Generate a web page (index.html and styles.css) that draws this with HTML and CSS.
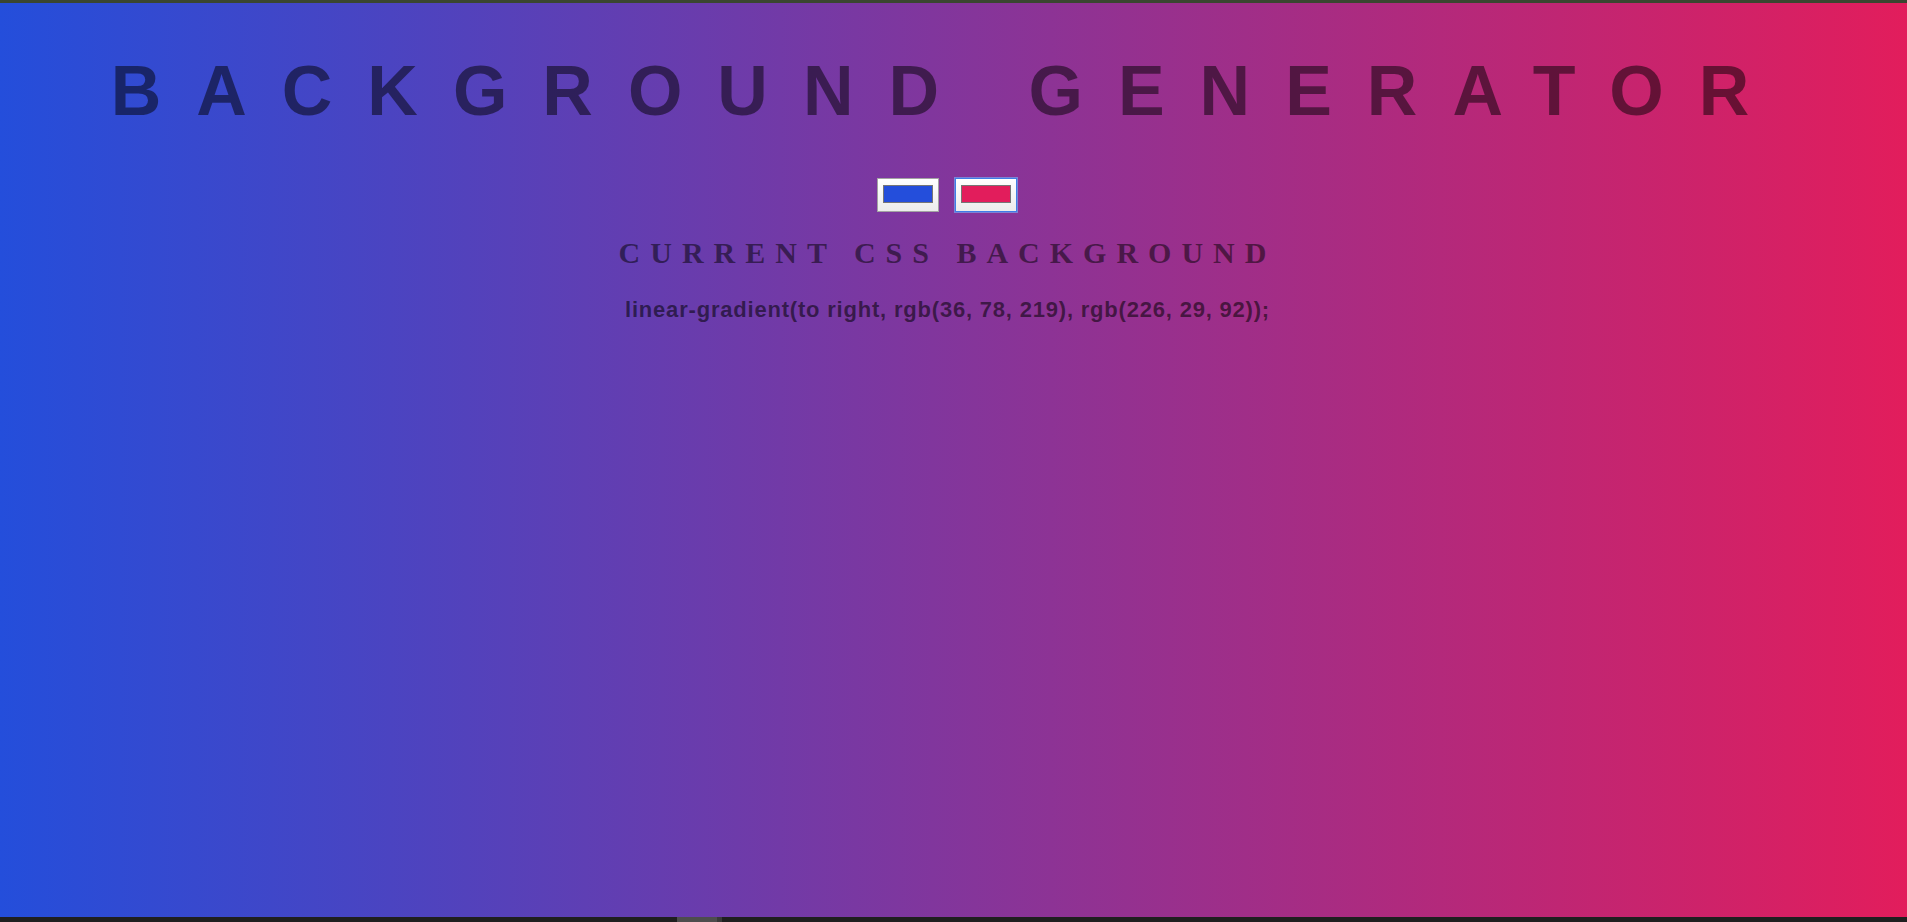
FILE: index.html
```html
<!DOCTYPE html>
<html lang="en">
<head>
<meta charset="utf-8">
<title>Background Generator</title>
<link rel="stylesheet" href="styles.css">
</head>
<body>
<div class="top-strip"></div>
<main class="page">
  <h1 class="title">Background Generator</h1>
  <div class="pickers">
    <div class="picker"><span class="swatch swatch-blue"></span></div>
    <div class="picker picker-focus"><span class="swatch swatch-pink"></span></div>
  </div>
  <h2 class="subtitle">Current CSS Background</h2>
  <p class="code">linear-gradient(to right, rgb(36, 78, 219), rgb(226, 29, 92));</p>
</main>
<div class="bottom-bar">
  <div class="thumb"></div>
  <div class="thumb-end"></div>
</div>
</body>
</html>
```

FILE: styles.css
```css
html, body {
  margin: 0;
  padding: 0;
  height: 100%;
}
body {
  display: flex;
  flex-direction: column;
  overflow: hidden;
  background: #1f1f1f;
  font-family: "Liberation Sans", Arial, sans-serif;
}
.top-strip {
  height: 3px;
  flex: none;
  background: #3a4630;
}
.page {
  flex: 1;
  background: linear-gradient(to right, rgb(36, 78, 219), rgb(226, 29, 92));
  text-align: center;
  padding: 48px 12px 0 0;
  color: rgba(0, 0, 0, 0.5);
}
.title {
  margin: 0;
  font: bold 70px/80px "Liberation Sans", Arial, sans-serif;
  letter-spacing: 35px;
  text-transform: uppercase;
  white-space: nowrap;
}
.pickers {
  display: flex;
  justify-content: center;
  gap: 16px;
  margin-top: 47px;
  padding-right: 1px;
}
.picker {
  box-sizing: border-box;
  width: 62px;
  height: 34px;
  border: 1px solid #a3a3a3;
  background: linear-gradient(#ffffff, #ececec);
  padding: 6px 5px 8px 5px;
}
.picker-focus {
  border-color: #3f7ee6;
  box-shadow: 0 0 0 1px rgba(120, 165, 240, 0.7);
}
.swatch {
  display: block;
  box-sizing: border-box;
  height: 18px;
  border: 1px solid #767676;
}
.swatch-blue { background: rgb(36, 78, 219); }
.swatch-pink { background: rgb(226, 29, 92); }
.subtitle {
  margin: 23px 0 0 0;
  font: bold 30px/36px "Liberation Serif", "Times New Roman", serif;
  letter-spacing: 10px;
  text-transform: uppercase;
}
.code {
  margin: 27px 0 0 0;
  font: bold 22px/23px "Liberation Sans", Arial, sans-serif;
  letter-spacing: 0.8px;
  color: rgba(0, 0, 0, 0.55);
}
.bottom-bar {
  height: 5px;
  flex: none;
  background: #1f1f1f;
  display: flex;
  padding-left: 677px;
}
.thumb {
  width: 40px;
  background: #4d4d4d;
}
.thumb-end {
  width: 5px;
  background: #393939;
}
```
